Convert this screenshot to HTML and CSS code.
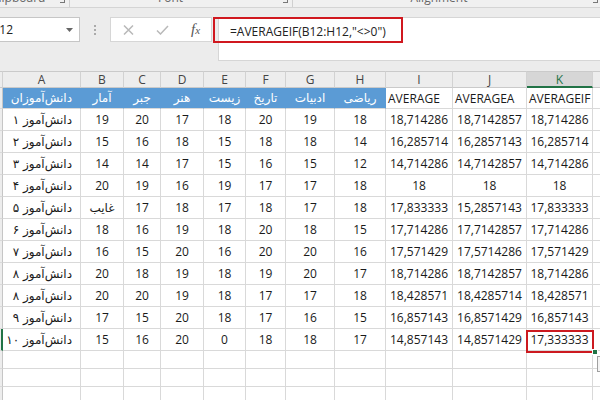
FILE: index.html
```html
<!DOCTYPE html>
<html lang="en">
<head>
<meta charset="utf-8">
<title>AVERAGEIF</title>
<link rel="stylesheet" href="styles.css">
</head>
<body>
<div class="ribbon">
  <div class="grp g1"><span class="glabel">Clipboard</span><span class="launch"></span></div>
  <div class="grp g2"><span class="glabel">Font</span><span class="launch"></span></div>
  <div class="grp g3"><span class="glabel">Alignment</span><span class="launch"></span></div>
</div>

<div class="fbar">
  <div class="namebox"><span class="nbtext">K12</span><svg class="caret" width="7" height="4" viewBox="0 0 7 4"><path d="M0 0H7L3.5 4Z"/></svg></div>
  <div class="grip"><i></i><i></i><i></i></div>
  <div class="fxbox">
    <svg class="ico-x" width="11" height="10" viewBox="0 0 11 10"><path d="M1 0.5L10 9.5M10 0.5L1 9.5"/></svg>
    <svg class="ico-ok" width="13" height="10" viewBox="0 0 13 10"><path d="M1 5.5L4.5 9L12 1"/></svg>
    <span class="fx"><i class="f">f</i><i class="x">x</i></span>
  </div>
  <div class="finput">
    <span class="ftext">=AVERAGEIF(B12:H12,"&lt;&gt;0")</span>
    <div class="redbox"></div>
  </div>
</div>

<div class="sheet">
  <!-- column headers -->
  <div class="ch corner"></div>
  <div class="ch">A</div><div class="ch">B</div><div class="ch">C</div><div class="ch">D</div>
  <div class="ch">E</div><div class="ch">F</div><div class="ch">G</div><div class="ch">H</div>
  <div class="ch">I</div><div class="ch">J</div><div class="ch sel">K</div><div class="ch"></div>

  <!-- header row -->
  <div class="rh"></div>
  <div class="c hd fa">دانش‌آموزان</div>
  <div class="c hd fa mid">آمار</div>
  <div class="c hd fa mid">جبر</div>
  <div class="c hd fa mid">هنر</div>
  <div class="c hd fa mid">زیست</div>
  <div class="c hd fa mid">تاریخ</div>
  <div class="c hd fa mid">ادبیات</div>
  <div class="c hd fa mid">ریاضی</div>
  <div class="c lt">AVERAGE</div><div class="c lt">AVERAGEA</div><div class="c lt">AVERAGEIF</div><div class="c"></div>

  <!-- 1 -->
  <div class="rh"></div><div class="c fa">دانش‌آموز ۱</div>
  <div class="c">19</div><div class="c">20</div><div class="c">17</div><div class="c">18</div><div class="c">20</div><div class="c">19</div><div class="c">18</div>
  <div class="c">18,714286</div><div class="c">18,7142857</div><div class="c">18,714286</div><div class="c"></div>
  <!-- 2 -->
  <div class="rh"></div><div class="c fa">دانش‌آموز ۲</div>
  <div class="c">15</div><div class="c">16</div><div class="c">18</div><div class="c">15</div><div class="c">18</div><div class="c">18</div><div class="c">14</div>
  <div class="c">16,285714</div><div class="c">16,2857143</div><div class="c">16,285714</div><div class="c"></div>
  <!-- 3 -->
  <div class="rh"></div><div class="c fa">دانش‌آموز ۳</div>
  <div class="c">14</div><div class="c">14</div><div class="c">17</div><div class="c">15</div><div class="c">16</div><div class="c">15</div><div class="c">12</div>
  <div class="c">14,714286</div><div class="c">14,7142857</div><div class="c">14,714286</div><div class="c"></div>
  <!-- 4 -->
  <div class="rh"></div><div class="c fa">دانش‌آموز ۴</div>
  <div class="c">20</div><div class="c">19</div><div class="c">16</div><div class="c">19</div><div class="c">17</div><div class="c">17</div><div class="c">18</div>
  <div class="c">18</div><div class="c">18</div><div class="c">18</div><div class="c"></div>
  <!-- 5 -->
  <div class="rh"></div><div class="c fa">دانش‌آموز ۵</div>
  <div class="c fa mid">غایب</div><div class="c">17</div><div class="c">18</div><div class="c">17</div><div class="c">18</div><div class="c">17</div><div class="c">18</div>
  <div class="c">17,833333</div><div class="c">15,2857143</div><div class="c">17,833333</div><div class="c"></div>
  <!-- 6 -->
  <div class="rh"></div><div class="c fa">دانش‌آموز ۶</div>
  <div class="c">18</div><div class="c">16</div><div class="c">19</div><div class="c">18</div><div class="c">20</div><div class="c">18</div><div class="c">15</div>
  <div class="c">17,714286</div><div class="c">17,7142857</div><div class="c">17,714286</div><div class="c"></div>
  <!-- 7 -->
  <div class="rh"></div><div class="c fa">دانش‌آموز ۷</div>
  <div class="c">16</div><div class="c">15</div><div class="c">20</div><div class="c">16</div><div class="c">20</div><div class="c">20</div><div class="c">16</div>
  <div class="c">17,571429</div><div class="c">17,5714286</div><div class="c">17,571429</div><div class="c"></div>
  <!-- 8 -->
  <div class="rh"></div><div class="c fa">دانش‌آموز ۸</div>
  <div class="c">20</div><div class="c">18</div><div class="c">19</div><div class="c">18</div><div class="c">19</div><div class="c">20</div><div class="c">17</div>
  <div class="c">18,714286</div><div class="c">18,7142857</div><div class="c">18,714286</div><div class="c"></div>
  <!-- 8 -->
  <div class="rh"></div><div class="c fa">دانش‌آموز ۸</div>
  <div class="c">20</div><div class="c">20</div><div class="c">19</div><div class="c">18</div><div class="c">17</div><div class="c">17</div><div class="c">18</div>
  <div class="c">18,428571</div><div class="c">18,4285714</div><div class="c">18,428571</div><div class="c"></div>
  <!-- 9 -->
  <div class="rh"></div><div class="c fa">دانش‌آموز ۹</div>
  <div class="c">17</div><div class="c">15</div><div class="c">20</div><div class="c">18</div><div class="c">17</div><div class="c">16</div><div class="c">15</div>
  <div class="c">16,857143</div><div class="c">16,8571429</div><div class="c">16,857143</div><div class="c"></div>
  <!-- 10 (selected row) -->
  <div class="rh sel"></div><div class="c fa">دانش‌آموز ۱۰</div>
  <div class="c">15</div><div class="c">16</div><div class="c">20</div><div class="c">0</div><div class="c">18</div><div class="c">18</div><div class="c">17</div>
  <div class="c">14,857143</div><div class="c">14,8571429</div>
  <div class="c active">17,333333<span class="mark"></span><span class="handle"></span><span class="paste"></span></div>
  <div class="c"></div>

  <!-- empty rows -->
  <div class="rh"></div><div class="c"></div><div class="c"></div><div class="c"></div><div class="c"></div><div class="c"></div><div class="c"></div><div class="c"></div><div class="c"></div><div class="c"></div><div class="c"></div><div class="c"></div><div class="c"></div>
  <div class="rh"></div><div class="c"></div><div class="c"></div><div class="c"></div><div class="c"></div><div class="c"></div><div class="c"></div><div class="c"></div><div class="c"></div><div class="c"></div><div class="c"></div><div class="c"></div><div class="c"></div>
  <div class="rh"></div><div class="c"></div><div class="c"></div><div class="c"></div><div class="c"></div><div class="c"></div><div class="c"></div><div class="c"></div><div class="c"></div><div class="c"></div><div class="c"></div><div class="c"></div><div class="c"></div>
</div>
</body>
</html>
```

FILE: styles.css
```css
* { box-sizing: border-box; }

body {
  margin: 0;
  width: 600px;
  height: 400px;
  overflow: hidden;
  background: #ececec;
  font-family: "Open Sans", "DejaVu Sans", sans-serif;
  font-size: 12px;
  color: #1e1e1e;
}

/* ribbon bottom edge */
.ribbon {
  display: flex;
  height: 8px;
  border-bottom: 1px solid #d4d4d4;
  overflow: hidden;
  background: #f0f0f0;
}
.grp {
  display: flex;
  align-items: flex-start;
  flex: none;
  height: 7px;
  border-right: 1px solid #d0d0d0;
}
.g1 { width: 70px; }
.g2 { width: 223px; }
.g3 { width: 310px; }
.glabel {
  flex: 1;
  margin-top: -9px;
  line-height: 14px;
  font-size: 12px;
  color: #666;
  text-align: center;
  white-space: nowrap;
}
.g1 .glabel { text-align: left; text-indent: -9px; }
.g2 .glabel { padding-right: 12px; }
.g3 .glabel { padding-right: 8px; }
.launch {
  width: 5px;
  height: 5px;
  margin: -2px 4px 0 0;
  border-right: 1px solid #777;
  border-bottom: 1px solid #777;
}

/* formula bar */
.fbar {
  display: flex;
  align-items: flex-start;
  height: 63px;
  padding-top: 9px;
}
.namebox {
  flex: none;
  display: flex;
  align-items: center;
  width: 92px;
  height: 25px;
  margin-left: -12px;
  padding: 0 6px 0 3px;
  background: #fff;
  border: 1px solid #c6c6c6;
  font-size: 12px;
  color: #222;
}
.caret { margin-left: auto; fill: #666; }
.grip {
  flex: none;
  width: 30px;
  height: 25px;
  display: flex;
  flex-direction: column;
  align-items: center;
  justify-content: center;
  gap: 2px;
}
.grip i { width: 2px; height: 2px; background: #aaa; }
.fxbox {
  flex: none;
  display: flex;
  align-items: center;
  width: 102px;
  height: 25px;
  padding-left: 12px;
  background: #fff;
  border: 1px solid #d6d6d6;
}
.ico-x path, .ico-ok path { fill: none; stroke: #b9b9b9; stroke-width: 1.5; }
.ico-ok { margin-left: 22px; }
.fx {
  margin-left: 22px;
  font-family: "Liberation Serif", serif;
  color: #555;
  line-height: 14px;
}
.fx .f { font-size: 15px; }
.fx .x { font-size: 11px; }
.finput {
  position: relative;
  flex: 1;
  height: 44px;
  margin-left: 6px;
  padding: 4px 0 0 11px;
  background: #fff;
  border: 1px solid #d6d6d6;
  border-right: none;
  line-height: 20px;
  font-size: 12px;
  color: #222;
  white-space: nowrap;
}
.redbox {
  position: absolute;
  left: -6px;
  top: -1px;
  width: 190px;
  height: 26px;
  border: 2.5px solid #d0181f;
}

/* sheet grid */
.sheet {
  display: grid;
  grid-template-columns: 3px 78px 43px 37px 43px 42px 40px 49px 51px 67px 74px 66px 30px;
  grid-template-rows: 17px 21px repeat(11, 22px) repeat(3, 18px);
  background: #fff;
}
.ch {
  background: #ededed;
  border-top: 1px solid #cacaca;
  border-right: 1px solid #d2d2d2;
  border-bottom: 1px solid #cacaca;
  text-align: center;
  line-height: 15px;
  font-size: 12px;
  color: #444;
}
.ch.sel {
  background: #d6d6d6;
  color: #217346;
  border-bottom: 2px solid #217346;
}
.rh {
  background: #ededed;
  border-right: 1px solid #c6c6c6;
  border-bottom: 1px solid #dadada;
}
.rh.sel { border-right: 2px solid #217346; }

.c {
  display: flex;
  align-items: center;
  justify-content: center;
  border-right: 1px solid #d9d9d9;
  border-bottom: 1px solid #d9d9d9;
  white-space: nowrap;
  overflow: hidden;
  font-size: 12px;
  color: #1a1a1a;
}
.fa {
  direction: rtl;
  justify-content: flex-start;
  padding-right: 8px;
  font-family: "DejaVu Sans", sans-serif;
  font-size: 12px;
}
.fa.mid { justify-content: center; padding-right: 0; }
.hd {
  background: #5b9bd5;
  color: #fff;
  border-right-color: #5b9bd5;
}
.lt { justify-content: flex-start; padding-left: 2px; }

.active { position: relative; overflow: visible; }
.mark {
  position: absolute;
  left: -1px;
  top: 1px;
  width: 68px;
  height: 23px;
  border: 2.5px solid #cc1a20;
}
.handle {
  position: absolute;
  left: 65px;
  top: 20px;
  width: 6px;
  height: 6px;
  background: #217346;
  border: 1px solid #fff;
}
.paste {
  position: absolute;
  left: 70px;
  top: 27px;
  width: 18px;
  height: 16px;
  background: #f4f4f4;
  border: 1px solid #a0a0a0;
}
```
